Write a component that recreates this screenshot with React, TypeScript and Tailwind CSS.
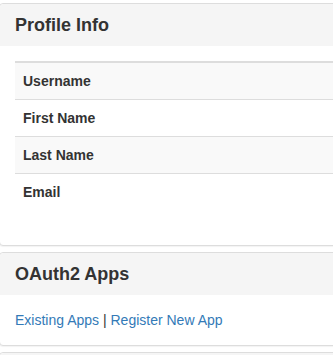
import React from 'react';

const rows = ['Username', 'First Name', 'Last Name', 'Email'];

const Panel: React.FC<{ title: string; children?: React.ReactNode; className?: string }> = ({ title, children, className }) => (
  <div className={`-ml-px w-[350px] rounded border border-[#ddd] bg-white shadow-[0_1px_1px_rgba(0,0,0,0.05)] ${className ?? ''}`}>
    <div className="rounded-t bg-[#f5f5f5] px-[15px] py-[10px]">
      <h3 className="text-[18px] font-bold leading-[22px] text-[#333]">{title}</h3>
    </div>
    {children}
  </div>
);

export default function App() {
  return (
    <div
      className="h-[355px] w-[333px] overflow-hidden bg-white pt-[3px] text-[14px] text-[#333]"
      style={{ fontFamily: '"Liberation Sans", Arial, Helvetica, sans-serif' }}
    >
      <Panel title="Profile Info">
        <div className="p-[15px]">
          <table className="mb-[20px] w-full border-collapse">
            <tbody>
              {rows.map((r, i) => (
                <tr key={r} className={i % 2 === 0 ? 'bg-[#f9f9f9]' : ''}>
                  <th className={`border-t border-[#ddd] p-[8px] text-left font-bold leading-[20px] ${i === 0 ? 'border-t-2' : ''}`}>
                    {r}
                  </th>
                </tr>
              ))}
            </tbody>
          </table>
        </div>
      </Panel>

      <Panel title="OAuth2 Apps" className="mt-[6px]">
        <div className="p-[15px] leading-[20px]">
          <a href="#" className="text-[#337ab7]">Existing Apps</a> | <a href="#" className="text-[#337ab7]">Register New App</a>
        </div>
      </Panel>

      <Panel title="" className="mt-[6px]" />
    </div>
  );
}
